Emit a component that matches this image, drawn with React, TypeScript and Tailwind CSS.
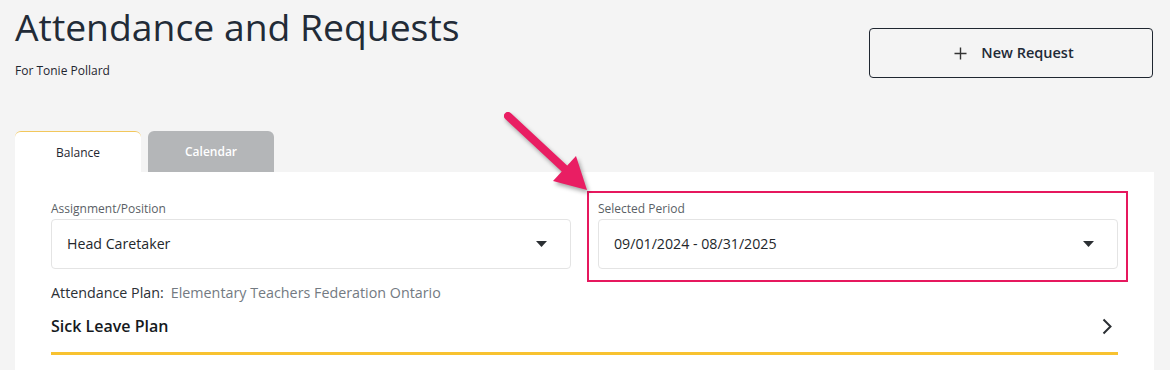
import React from "react";

function Caret() {
  return (
    <svg width="11" height="6" viewBox="0 0 11 6" className="shrink-0">
      <path d="M0 0 L11 0 L5.5 6 Z" fill="#2b2f33" />
    </svg>
  );
}

function Select({ label, value }: { label: string; value: string }) {
  return (
    <div className="flex flex-col">
      <div className="text-[12px] leading-[18px] text-[#5a5f66]">{label}</div>
      <div className="mt-[1px] h-[50px] rounded-[4px] border border-[#e4e4e4] bg-white flex items-center justify-between pl-[15px] pr-[23px]">
        <span className="text-[14.2px] text-[#23272b]">{value}</span>
        <Caret />
      </div>
    </div>
  );
}

export default function App() {
  return (
    <div
      className="relative w-[1170px] h-[370px] overflow-hidden bg-[#f4f4f4]"
      style={{ fontFamily: "'Open Sans', 'Noto Sans', sans-serif" }}
    >
      {/* Header */}
      <div className="h-[131px] pt-[4px] flex justify-between items-start">
        <div className="pl-[15px]">
          <h1 className="text-[37.3px] leading-[46px] font-normal text-[#222b37]">
            Attendance and Requests
          </h1>
          <div className="mt-[13px] text-[12px] leading-[16px] text-[#1f2630]">For Tonie Pollard</div>
        </div>
        <button className="mt-[24px] mr-[17px] w-[284px] h-[50px] rounded-[4px] border border-[#1f2630] bg-[#f4f4f4] flex items-center justify-center gap-[14px] pl-[6px] text-[#1f2a37]">
          <svg width="13" height="13" viewBox="0 0 13 13">
            <path d="M6.5 0.5 V12.5 M0.5 6.5 H12.5" stroke="#333" strokeWidth="1.4" fill="none" />
          </svg>
          <span className="text-[14.5px] font-semibold">New Request</span>
        </button>
      </div>

      {/* Tabs */}
      <div className="flex pl-[15px] h-[41px]">
        <div className="w-[126px] h-[41px] bg-white rounded-t-[6px] border-t border-[#f2c75c] flex items-center justify-center pt-[2px] text-[12px] text-[#1f2630]">
          Balance
        </div>
        <div className="ml-[7px] w-[126px] h-[41px] bg-[#b4b6b8] rounded-t-[6px] flex items-center justify-center text-[12px] font-semibold text-white">
          Calendar
        </div>
      </div>

      {/* Panel */}
      <div className="ml-[15px] w-[1139px] bg-white px-[36px] pt-[28px] h-[210px]">
        <div className="grid grid-cols-2 gap-x-[27px]">
          <Select label="Assignment/Position" value="Head Caretaker" />
          <Select label="Selected Period" value="09/01/2024 - 08/31/2025" />
        </div>
        <div className="mt-[14px] text-[14.3px] leading-[20px] flex">
          <span className="text-[#2b3036]">Attendance Plan:</span>
          <span className="ml-[7px] text-[#737a82]">Elementary Teachers Federation Ontario</span>
        </div>
        <div className="mt-[11px] flex items-center justify-between border-b-[3px] border-[#f8c230] pb-[14px]">
          <span className="text-[16px] leading-[24px] font-semibold text-[#15191d]">Sick Leave Plan</span>
          <svg width="10" height="17" viewBox="0 0 10 17" className="mr-[6px]">
            <path d="M1.5 1.5 L8.5 8.5 L1.5 15.5" stroke="#2b2f33" strokeWidth="2" fill="none" />
          </svg>
        </div>
      </div>

      {/* Annotation: highlight box */}
      <div className="absolute left-[587px] top-[191px] w-[541px] h-[91px] border-2 border-[#e6185e] pointer-events-none" />

      {/* Annotation: arrow */}
      <svg
        className="absolute left-0 top-0 pointer-events-none"
        width="1170"
        height="370"
        style={{ filter: "drop-shadow(2px 3px 2px rgba(0,0,0,0.35))" }}
      >
        <line x1="508" y1="116" x2="566" y2="170" stroke="#e91e63" strokeWidth="8" strokeLinecap="round" />
        <polygon points="587,190 553,181 576,156" fill="#e91e63" />
      </svg>
    </div>
  );
}
